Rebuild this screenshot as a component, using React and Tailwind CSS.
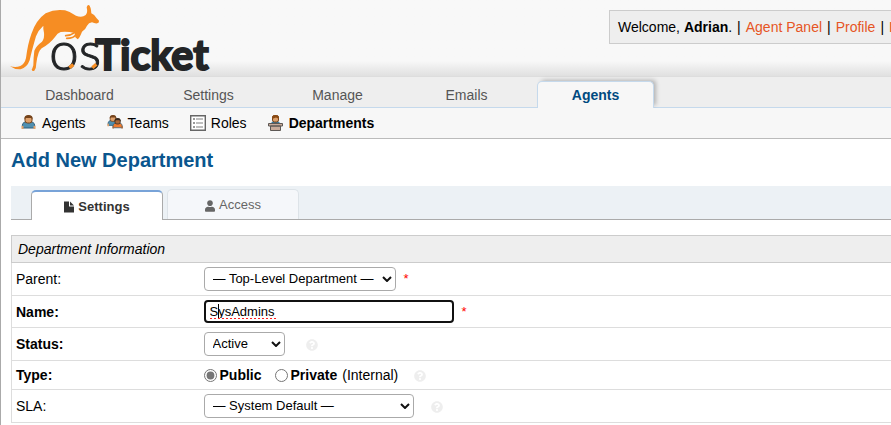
import React from 'react';
import { FaUser, FaQuestionCircle } from 'react-icons/fa';

function Logo() {
  return (
    <svg viewBox="0 0 690 228" className="block h-[76px] w-[230px] overflow-visible" role="img" aria-label="osTicket">
      <path
        fill="#f68d23"
        d="M260 22 Q262 14 267 15 Q273 20 274 40 Q286 45 290 55 L297 62 Q298 68 292 70 Q284 71 276 67 Q266 68 261 77 Q256 90 246 95 Q240 112 233 118 L226 112 L224 99 Q200 93 182 96 Q172 99 165 111 Q150 131 125 145 Q119 150 116 158 Q111 172 109 190 Q109 205 103 212 Q97 215 95 209 Q98 204 100 196 Q100 174 103 152 Q108 138 126 125 Q134 114 132 98 Q129 87 130 77 Q115 90 108 109 Q96 150 89 181 Q81 203 62 208 Q44 209 30 199 Q48 203 61 198 Q74 192 78 174 Q83 133 94 102 Q108 60 137 40 Q165 26 195 31 Q213 36 228 47 Q246 54 257 45 Q264 38 260 22 Z"
      />
      <path fill="none" stroke="#f68d23" strokeWidth="5" strokeLinecap="round" d="M224 98 Q212 107 197 107 M228 103 Q222 115 200 115" />
      <g fill="#232527" stroke="#232527">
        <text x="148" y="209" fontFamily="Lato, sans-serif" fontWeight="300" fontSize="158" strokeWidth="3">os</text>
        <text x="286" y="209" fontFamily="Lato, sans-serif" fontWeight="700" fontSize="124" strokeWidth="6">Ticket</text>
      </g>
      <path stroke="#f68d23" strokeWidth="10" d="M208 203 L220 194 M277 203 L289 193" />
    </svg>
  );
}

function Person({ x = 0, y = 0, s = 1, shirt = '#4f8fb0', skin = '#dfa16c', hair = '#74431b' }) {
  return (
    <g transform={`translate(${x} ${y}) scale(${s})`}>
      <path d="M1.500 13 Q0.500 7 5 7 H10 Q14.500 7 13.500 13 Z" fill={shirt} stroke="#315d78" strokeWidth="1" />
      <path d="M0.500 11h2v3h-2zM12.500 11h2v3h-2z" fill={skin} />
      <rect x="4" y="1" width="7" height="7" rx="2.500" fill={skin} stroke={hair} strokeWidth="1" />
      <path d="M3.500 4.500 V2.500 Q4 0 7.500 0 Q11 0 11.500 2.500 V4.500 L10 3 H5 Z" fill={hair} />
    </g>
  );
}

function NavIcon({ kind }) {
  return (
    <svg viewBox="0 0 16 16" className="size-4 shrink-0" aria-hidden="true">
      {kind === 'agents' && <Person x={0} />}
      {kind === 'teams' && (
        <>
          <Person y={0} s={0.8} />
          <Person x={5} y={3} s={0.75} shirt="#ef7b2e" skin="#a8683a" hair="#38291f" />
        </>
      )}
      {kind === 'roles' && (
        <>
          <path d="M0.700 0.700h14.600v14.600h-14.600z" fill="#fff" stroke="#666" strokeWidth="1.4" />
          <path d="M3 4h2M3 8h2M3 12h2" stroke="#999" strokeWidth="2" />
          <path d="M6 4h7M6 8h7M6 12h7" stroke="#aaa" strokeWidth="1.5" />
        </>
      )}
      {kind === 'departments' && (
        <>
          <path d="M3 9 Q3 6 7.500 6 Q12 6 12 9Z" fill="#397ba0" />
          <rect x="4.500" y="0.500" width="6" height="6.500" rx="2" fill="#dda06b" stroke="#74431b" />
          <path d="M4 4 V2 Q4.500 0 7.500 0 Q10.500 0 11 2 V4 L8 2.500Z" fill="#8a4a14" />
          <path d="M0.500 8.500h14v2.500h-14zM2.500 11h10v4.500h-10z" fill="#c9ab9a" stroke="#5d5854" />
        </>
      )}
    </svg>
  );
}

function FileIcon() {
  return (
    <svg viewBox="0 0 10 12" className="h-[12px] w-[10px]" aria-hidden="true">
      <path d="M0 0.500h5v5h5v6H0zM6 0.500l4 4H6z" fill="#333" />
    </svg>
  );
}

function Select({ id, width, children }) {
  return (
    <div className={`relative ${width}`}>
      <select id={id} className="h-6 w-full appearance-none rounded border border-[#aaa] bg-white pl-2 text-[13px] leading-5 text-black">
        <option>{children}</option>
      </select>
      <svg viewBox="0 0 10 6" className="pointer-events-none absolute top-[9px] right-1 h-[6px] w-[10px]" aria-hidden="true">
        <path d="M1 1l4 4 4-4" fill="none" stroke="#111" strokeWidth="2" />
      </svg>
    </div>
  );
}

function Row({ label, htmlFor, bold, height = 'h-[33px]', children }) {
  return (
    <tr className={`${height} border-b border-[#ddd]`}>
      <th scope="row" className={`w-[192px] p-0 pl-1 text-left align-middle ${bold ? 'font-bold' : 'font-normal'}`}>
        <label htmlFor={htmlFor}>{label}</label>
      </th>
      <td className="p-0 align-middle">
        <div className="flex items-center">{children}</div>
      </td>
    </tr>
  );
}

function Required() {
  return <span className="ml-2 text-[13px] leading-5 text-[#f00]">*</span>;
}

function Help({ margin }) {
  return (
    <button type="button" aria-label="Help" className={`${margin} mt-0.5 text-[#eee]`}>
      <FaQuestionCircle className="size-3" />
    </button>
  );
}

const tabs = ['Dashboard', 'Settings', 'Manage', 'Emails', 'Agents'];
const subnav = [
  ['agents', 'Agents'],
  ['teams', 'Teams'],
  ['roles', 'Roles'],
  ['departments', 'Departments'],
];

export default function App() {
  return (
    <div className="min-h-screen overflow-hidden border-l border-[#aaa] bg-white font-['Liberation_Sans',Arial,sans-serif] text-sm text-black">
      <header className="flex h-[77px] items-start justify-between border-b border-[#ddd] bg-linear-to-b from-[#f8f8f8] from-80% to-[#e0e0e0]">
        <a href="#home" className="-ml-px shrink-0">
          <Logo />
        </a>
        <div className="mt-[10px] flex h-[34px] w-[282px] shrink-0 gap-[5px] overflow-hidden border border-r-0 border-[#ccc] bg-[#eee] pl-2 leading-8 whitespace-nowrap">
          <span>
            Welcome, <strong>Adrian</strong>.
          </span>
          <span>|</span>
          <a href="#panel" className="text-[#e65524]">Agent Panel</a>
          <span>|</span>
          <a href="#profile" className="text-[#e65524]">Profile</a>
          <span>|</span>
          <a href="#logout" className="text-[#e65524]">Log Out</a>
        </div>
      </header>

      <nav className="flex h-[31px] items-end gap-3 border-b border-[#c5d9ec] bg-[#eee] pl-5">
        {tabs.map((tab) => (
          <a
            key={tab}
            href={`#${tab}`}
            className={
              tab === 'Agents'
                ? '-mb-px h-[27px] w-[117px] rounded-t-[5px] border border-b-0 border-[#c5d9ec] bg-[#f7f7f7] text-center leading-[26px] font-bold text-[#004a80] shadow-[3px_-2px_4px_-1px_rgba(0,0,0,0.25)] [clip-path:inset(-6px_-8px_0px_-6px)]'
                : 'h-[26px] w-[117px] text-center leading-7 text-[#555]'
            }
          >
            {tab}
          </a>
        ))}
      </nav>

      <nav className="flex h-[31px] items-center gap-[21px] border-b border-[#bbb] bg-[#f7f7f7] pl-5">
        {subnav.map(([kind, name]) => (
          <a key={kind} href={`#${kind}`} className={`flex items-center gap-[5px] ${kind === 'departments' ? 'font-bold' : ''}`}>
            <NavIcon kind={kind} />
            {name}
          </a>
        ))}
      </nav>

      <main className="pl-[10px]">
        <h1 className="pt-[7px] text-xl leading-7 font-bold text-[#0a568e]">Add New Department</h1>

        <div role="tablist" className="mt-3 flex h-[34px] items-end gap-1 border-b border-[#aaa] bg-[#ecf1f5] pl-5 text-[13px]">
          <button
            type="button"
            role="tab"
            aria-selected="true"
            className="-mb-px flex h-[30px] w-[132px] items-center justify-center gap-1 rounded-t-[5px] border border-t-2 border-b-0 border-[#aaa] border-t-[#78a3d8] bg-white pt-0.5 font-bold text-[#333]"
          >
            <FileIcon /> Settings
          </button>
          <button
            type="button"
            role="tab"
            aria-selected="false"
            className="flex h-[30px] w-[132px] items-center justify-center gap-1 rounded-t-[5px] border border-b-0 border-[#dde3e8] bg-[#f5f7fa] pt-0.5 text-[#666]"
          >
            <FaUser className="h-3 w-[10px]" /> Access
          </button>
        </div>

        <form>
          <table className="mt-[15px] w-full border-collapse border-l border-[#ddd]">
            <thead>
              <tr className="h-[27px] border border-r-0 border-[#ccc] bg-[#eee]">
                <th colSpan={2} className="p-0 pl-[6px] text-left font-normal italic">
                  Department Information
                </th>
              </tr>
            </thead>
            <tbody>
              <Row label="Parent:" htmlFor="parent">
                <Select id="parent" width="w-[192px]">— Top-Level Department —</Select>
                <Required />
              </Row>
              <Row label="Name:" htmlFor="name" bold height="h-8">
                <div className="relative w-[250px]">
                  <input
                    id="name"
                    type="text"
                    defaultValue="SysAdmins"
                    spellCheck={false}
                    className="block h-[23px] w-full rounded border-2 border-[#111] bg-white pl-1 text-[13px] text-black outline-none"
                  />
                  <span className="absolute top-1 left-[14px] h-[15px] w-px bg-black" />
                  <span className="absolute top-[18px] left-[6px] h-px w-[66px] bg-[repeating-linear-gradient(90deg,#ff2020_0px,#ff2020_2px,#ffffff_2px,#ffffff_4px)]" />
                </div>
                <Required />
              </Row>
              <Row label="Status:" htmlFor="status" bold>
                <Select id="status" width="w-[81px]">Active</Select>
                <Help margin="ml-[21px]" />
              </Row>
              <Row label="Type:" htmlFor="public" bold height="h-[29px]">
                <input id="public" type="radio" name="type" defaultChecked className="size-[13px] accent-[#767676]" />
                <label htmlFor="public" className="ml-[3px] font-bold">Public</label>
                <input id="private" type="radio" name="type" className="ml-[13px] size-[13px]" />
                <label htmlFor="private" className="ml-[3px] flex gap-[5px]">
                  <strong>Private</strong> (Internal)
                </label>
                <Help margin="ml-4" />
              </Row>
              <Row label="SLA:" htmlFor="sla">
                <Select id="sla" width="w-[210px]">— System Default —</Select>
                <Help margin="ml-[17px]" />
              </Row>
            </tbody>
          </table>
        </form>
      </main>
    </div>
  );
}
